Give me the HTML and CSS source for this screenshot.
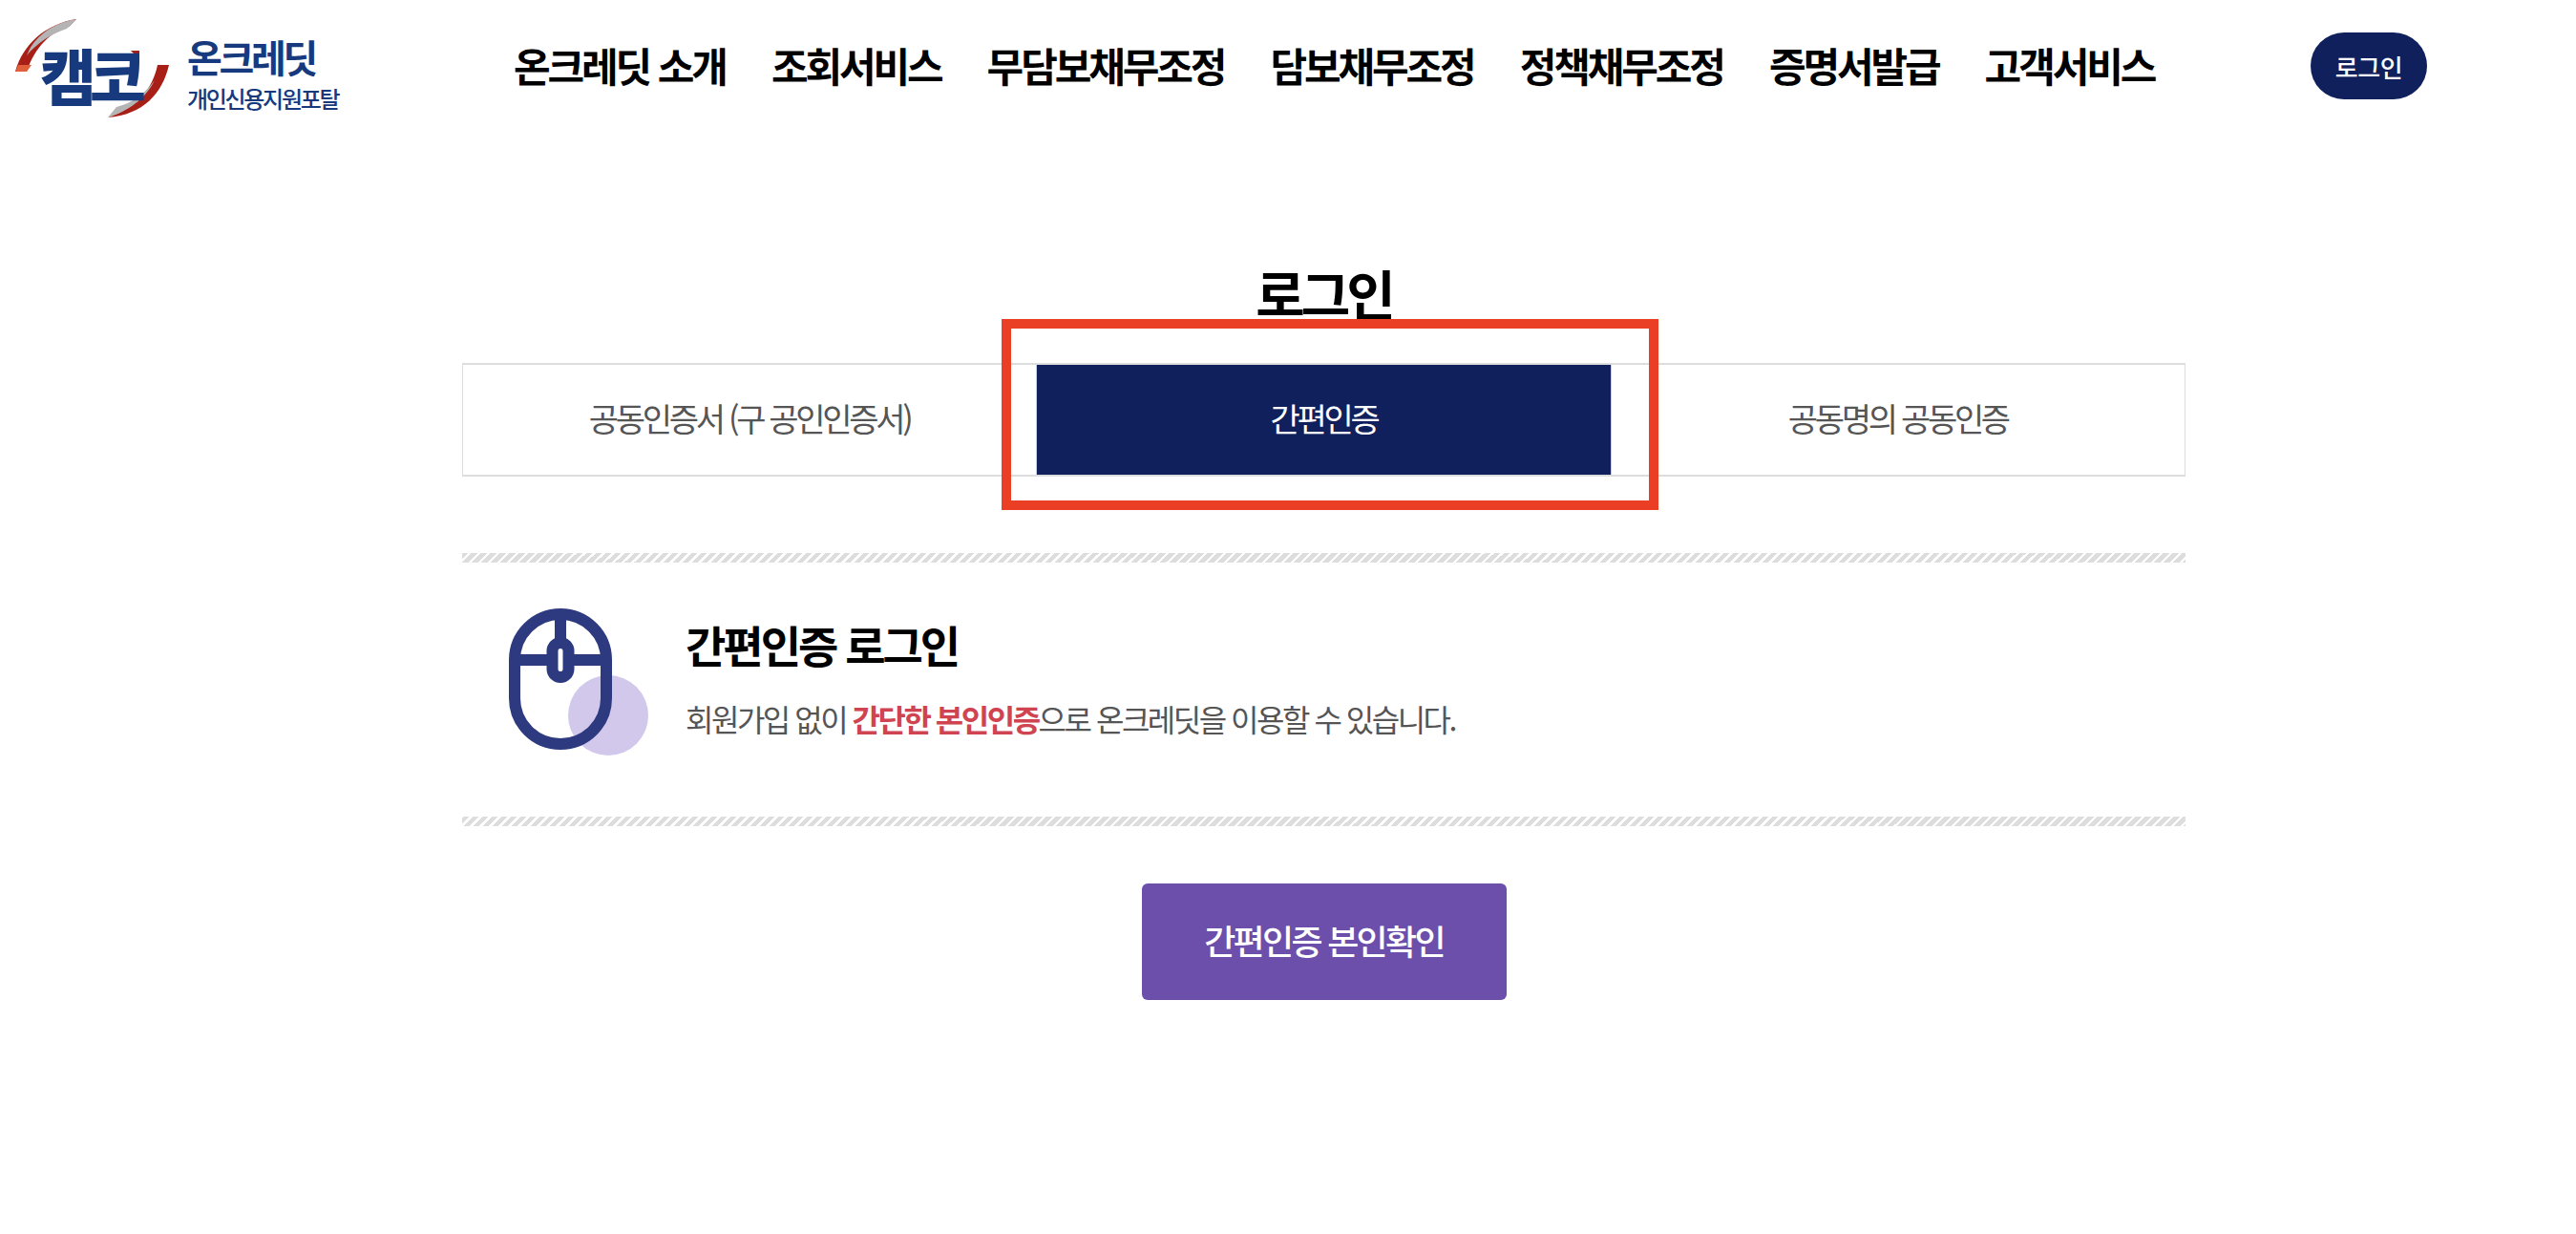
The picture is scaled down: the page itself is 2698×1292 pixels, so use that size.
FILE: index.html
```html
<!DOCTYPE html>
<html lang="ko">
<head>
<meta charset="utf-8">
<title>로그인</title>
<link rel="stylesheet" href="styles.css">
</head>
<body>
<header class="header">
  <a class="logo">
    <span class="logo-mark">
      <svg class="logo-arcs" viewBox="0 0 180 125" width="180" height="125">
        <path class="arc-red" d="M80 20 C48 25 24 46 16 75 L28 75 C36 50 54 32 72 28 Z"/>
        <path class="arc-gray" d="M80 20 C62 23 48 30 36 44 C31 50 30 54 28 58 C38 46 52 36 70 30 Z"/>
        <path class="arc-orange" d="M19 68 L33 68 L28 75 L16 75 Z"/>
        <path class="arc-red" d="M177 68 L165 68 C160 92 145 112 113 123 C150 120 170 98 177 68 Z"/>
        <path class="arc-gray" d="M113 123 L122 112 C138 108 150 100 162 84 C154 100 140 114 113 123 Z"/>
        <path class="arc-red" d="M137 53 H146 V62 Z"/>
      </svg>
      <span class="logo-kamco">캠코</span>
    </span>
    <span class="logo-text">
      <span class="logo-name">온크레딧</span>
      <span class="logo-sub">개인신용지원포탈</span>
    </span>
  </a>
  <nav class="nav">
    <a>온크레딧 소개</a>
    <a>조회서비스</a>
    <a>무담보채무조정</a>
    <a>담보채무조정</a>
    <a>정책채무조정</a>
    <a>증명서발급</a>
    <a>고객서비스</a>
  </nav>
  <a class="login-pill">로그인</a>
</header>
<main class="main">
  <h1 class="title">로그인</h1>
  <div class="tabs">
    <a class="tab">공동인증서 (구 공인인증서)</a>
    <a class="tab tab-active">간편인증<span class="highlight"></span></a>
    <a class="tab">공동명의 공동인증</a>
  </div>
  <section class="info">
    <svg class="info-icon" viewBox="0 0 146 154" width="146" height="154">
      <circle class="icon-dot" cx="104" cy="112" r="42"/>
      <rect class="icon-line" x="6" y="6" width="96" height="136" rx="48" ry="48"/>
      <path class="icon-line" d="M6 54 H45 M63 54 H102 M54 6 V36"/>
      <rect class="icon-line" x="45.500" y="36" width="17" height="36" rx="8.500"/>
    </svg>
    <div class="info-text">
      <h2 class="info-title">간편인증 로그인</h2>
      <p class="info-desc">회원가입 없이 <strong class="accent">간단한 본인인증</strong>으로 온크레딧을 이용할 수 있습니다.</p>
    </div>
  </section>
  <div class="actions">
    <a class="submit">간편인증 본인확인</a>
  </div>
</main>
</body>
</html>
```
FILE: styles.css
```css
* { box-sizing: border-box; }
html, body { margin: 0; padding: 0; background: #fff; }
body {
  width: 2698px;
  height: 1292px;
  overflow: hidden;
  font-family: "Noto Sans CJK KR", "Noto Sans", sans-serif;
  color: #000;
}
.header {
  height: 140px;
  display: flex;
  align-items: flex-start;
  position: relative;
}
.logo { display: flex; width: 538px; flex: none; }
.logo-mark { position: relative; width: 180px; height: 125px; display: block; flex: none; }
.logo-arcs { display: block; }
.arc-gray { fill: #b4b4b4; }
.arc-red { fill: #a81f17; }
.arc-orange { fill: #e0603c; }
.logo-kamco {
  position: absolute;
  left: 42px;
  top: 34px;
  font-size: 64px;
  line-height: 86px;
  font-weight: 900;
  letter-spacing: -7px;
  color: #163a7d;
}
.logo-text { display: flex; flex-direction: column; margin-left: 16px; color: #163a7d; }
.logo-name { font-size: 40px; line-height: 48px; margin-top: 35px; font-weight: 700; letter-spacing: -3.3px; }
.logo-sub { font-size: 24px; line-height: 30px; margin-top: 5px; font-weight: 500; letter-spacing: -2.3px; }
.nav { display: flex; gap: 48px; padding-top: 38px; }
.nav a { font-size: 42px; line-height: 60px; font-weight: 700; letter-spacing: -3.1px; white-space: nowrap; }
.login-pill {
  position: absolute;
  left: 2420px;
  top: 34px;
  width: 122px;
  height: 70px;
  border-radius: 35px;
  background: #0f205c;
  color: #fff;
  font-size: 26px;
  font-weight: 500;
  letter-spacing: -0.5px;
  display: flex;
  align-items: center;
  justify-content: center;
}
.main { width: 1805px; margin: 0 0 0 484px; }
.title {
  margin: 126px 0 0;
  height: 114px;
  font-size: 56px;
  line-height: 80px;
  font-weight: 700;
  letter-spacing: -4px;
  text-align: center;
}
.tabs { display: flex; height: 119px; border: 2px solid #ddd; border-left-width: 1px; border-right-width: 1px; }
.tab {
  flex: 1;
  display: flex;
  align-items: center;
  justify-content: center;
  padding-bottom: 4px;
  font-size: 34px;
  letter-spacing: -3.3px;
  color: #555;
  position: relative;
}
.tab-active { background: #0f205c; color: #fff; border-left: 1px solid #ccc; border-right: 1px solid #ccc; }
.highlight {
  position: absolute;
  left: -37px;
  right: -50px;
  top: -48px;
  bottom: -37px;
  border: 10px solid #ea3f25;
}
.info {
  margin-top: 80px;
  height: 286px;
  display: flex;
  align-items: center;
  padding: 0 0 0 49px;
  border-style: solid;
  border-width: 10px 0;
  border-image: repeating-linear-gradient(135deg, #ddd 0 4.500px, #fff 4.500px 7px) 10;
}
.info-icon { flex: none; margin-top: -16px; }
.icon-dot { fill: #d2c8ec; }
.icon-line { fill: none; stroke: #2d3a7f; stroke-width: 12px; }
.info-text { margin-left: 39px; margin-top: -26px; }
.info-title { margin: 0; font-size: 46px; line-height: 60px; font-weight: 700; letter-spacing: -3px; }
.info-desc { margin: 26px 0 0; font-size: 32px; line-height: 44px; letter-spacing: -2.500px; color: #555; }
.accent { color: #cf4450; font-weight: 700; }
.actions { display: flex; justify-content: center; margin-top: 60px; }
.submit {
  width: 382px;
  height: 122px;
  padding-bottom: 4px;
  border-radius: 6px;
  background: #6b4fab;
  color: #fff;
  font-size: 36px;
  font-weight: 500;
  letter-spacing: -2.700px;
  display: flex;
  align-items: center;
  justify-content: center;
}
```
